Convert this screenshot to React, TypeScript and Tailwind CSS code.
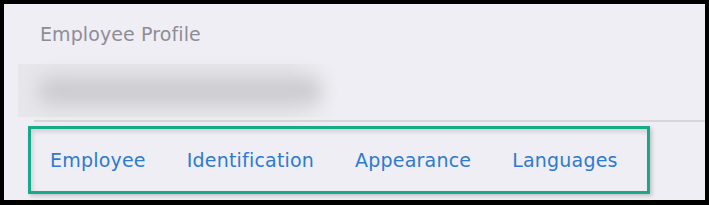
import React from "react";

export default function App() {
  const tabs = ["Employee", "Identification", "Appearance", "Languages"];
  return (
    <div className="w-[709px] h-[205px] bg-black pt-[4px] pl-[4px] pr-[4px] pb-[5px]" style={{ fontFamily: '"DejaVu Sans", "Liberation Sans", sans-serif' }}>
      <div className="w-full h-full bg-[#efeef4] flex flex-col overflow-hidden">
        <div className="pl-[36px] pt-[17px] h-[60px] text-[19px] leading-[26px] tracking-[0.1px] text-[#8e8d96]">Employee Profile</div>
        <div className="ml-[14px] w-[316px] h-[53px] bg-[linear-gradient(90deg,#e7e7eb_0%,#e7e7eb_85%,#efeef4_100%)] flex items-center pl-[20px]">
          <div className="w-[284px] h-[28px] rounded-full bg-[#cbcbd0] blur-[9px]" />
        </div>
        <div className="ml-[30px] mt-[3px] h-[2px] bg-[#d6d5da]" />
        <div className="ml-[24px] mt-[4px] w-[622px] h-[68px] border-[3px] border-[#16a98a] shadow-[inset_2px_3px_4px_rgba(0,0,0,0.12),2px_2px_4px_rgba(0,0,0,0.18)] flex items-center pl-[19px] gap-[41px]">
          {tabs.map((t) => (
            <span key={t} className="text-[19px] leading-[26px] tracking-[0.2px] text-[#2d7bcf]">{t}</span>
          ))}
        </div>
      </div>
    </div>
  );
}
